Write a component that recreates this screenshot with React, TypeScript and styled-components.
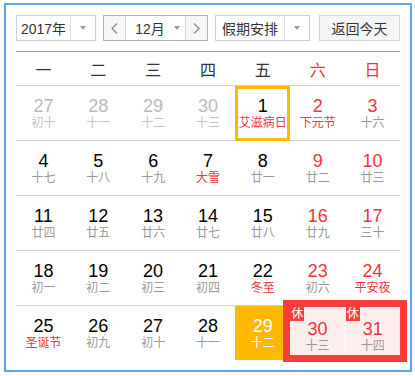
import React from "react";
import styled, { createGlobalStyle, css } from "styled-components";

const GlobalStyle = createGlobalStyle`
  html, body { margin: 0; padding: 0; background: #ffffff; }
  body { font-family: "Liberation Sans", Arial, "Noto Sans CJK SC", sans-serif; }
  * { box-sizing: border-box; }
`;

const BLUE = "#5ea6ef";
const RED = "#f0343c";
const GOLD = "#ffb800";
const LINE = "#d2d2d2";

const Frame = styled.div`
  margin: 3px 0 0 4px;
  width: 408px;
  border: 2px solid ${BLUE};
  padding: 10px 10px 10px;
  background: #fff;
`;

const Toolbar = styled.div`
  display: flex;
  align-items: center;
  gap: 7px;
  padding-bottom: 10px;
  border-bottom: 1px solid ${BLUE};
`;

const SelectBox = styled.div<{ $width: number }>`
  display: flex;
  width: ${(p) => p.$width}px;
  height: 26px;
  border: 1px solid #cfcfcf;
  background: #fff;
  color: #333;
  font-size: 14px;
`;

const SelectText = styled.div`
  flex: 1;
  display: flex;
  align-items: center;
  justify-content: center;
  border-right: 1px solid #dedede;
`;

const ArrowCell = styled.div`
  width: 24px;
  display: flex;
  align-items: center;
  justify-content: center;
`;

const Caret = styled.span`
  width: 0;
  height: 0;
  border-left: 3.5px solid transparent;
  border-right: 3.5px solid transparent;
  border-top: 4px solid #999;
`;

const MonthGroup = styled.div`
  display: flex;
  width: 105px;
  height: 26px;
  border: 1px solid #b4b4b4;
  color: #333;
  font-size: 14px;
`;

const NavButton = styled.div<{ $side: "left" | "right" }>`
  width: 22px;
  display: flex;
  align-items: center;
  justify-content: center;
  background: #f6f6f6;
  ${(p) =>
    p.$side === "left"
      ? css`border-right: 1px solid #d4d4d4;`
      : css`border-left: 1px solid #d4d4d4;`}
`;

const MonthLabel = styled.div`
  flex: 1;
  display: flex;
  align-items: center;
  justify-content: center;
  gap: 9px;
  padding-left: 4px;
  background: #fff;
`;

const TodayButton = styled.div`
  margin-left: auto;
  width: 81px;
  height: 26px;
  border: 1px solid #d4d4d4;
  background: #f5f5f5;
  color: #333;
  font-size: 14px;
  display: flex;
  align-items: center;
  justify-content: center;
`;

const WeekHeader = styled.div`
  display: grid;
  grid-template-columns: repeat(7, 1fr);
  height: 34px;
  border-bottom: 1px solid ${LINE};
`;

const WeekdayCell = styled.div<{ $weekend: boolean }>`
  display: flex;
  align-items: center;
  justify-content: center;
  font-size: 16px;
  color: ${(p) => (p.$weekend ? RED : "#333")};
`;

const WeekRow = styled.div<{ $last: boolean }>`
  display: grid;
  grid-template-columns: repeat(7, 1fr);
  height: ${(p) => (p.$last ? 54 : 55)}px;
  border-bottom: ${(p) => (p.$last ? "none" : `1px solid ${LINE}`)};
`;

type Variant = "normal" | "today" | "selected";

const DayCell = styled.div<{ $variant: Variant }>`
  position: relative;
  display: flex;
  flex-direction: column;
  align-items: center;
  padding-top: 10px;
  ${(p) =>
    p.$variant === "today" &&
    css`
      box-shadow: inset 0 0 0 3px ${GOLD};
      margin-bottom: -1px;
      z-index: 1;
    `}
  ${(p) =>
    p.$variant === "selected" &&
    css`
      background: ${GOLD};
    `}
`;

type Tone = "normal" | "weekend" | "muted" | "white";

const numColor: Record<Tone, string> = {
  normal: "#000",
  weekend: RED,
  muted: "#bbbbbb",
  white: "#fff",
};

const DayNum = styled.div<{ $tone: Tone }>`
  font-size: 18px;
  line-height: 20px;
  color: ${(p) => numColor[p.$tone]};
`;

type LunarTone = "normal" | "festival" | "muted" | "white";

const lunarColor: Record<LunarTone, string> = {
  normal: "#999",
  festival: RED,
  muted: "#c4c4c4",
  white: "#fff",
};

const Lunar = styled.div<{ $tone: LunarTone }>`
  font-size: 12px;
  line-height: 14px;
  white-space: nowrap;
  color: ${(p) => lunarColor[p.$tone]};
`;

const RestGroup = styled.div`
  grid-column: span 2;
  display: grid;
  grid-template-columns: 1fr 1fr;
  gap: 1px;
  margin: -6px -7px -2px;
  border: 7px solid #f93c3c;
  background: #fff;
  position: relative;
  z-index: 2;
`;

const RestCell = styled.div`
  position: relative;
  display: flex;
  flex-direction: column;
  align-items: center;
  padding-top: 12px;
  background: #fdeeee;
`;

const RestBadge = styled.span`
  position: absolute;
  top: 0;
  left: 0;
  width: 14px;
  height: 14px;
  background: #f93c3c;
  color: #fff;
  font-size: 12px;
  line-height: 14px;
  text-align: center;
`;

const Chevron = ({ dir }: { dir: "left" | "right" }) => (
  <svg width="7" height="11" viewBox="0 0 7 11">
    <polyline
      points={dir === "left" ? "6,0.5 1,5.5 6,10.5" : "1,0.5 6,5.5 1,10.5"}
      fill="none"
      stroke="#888"
      strokeWidth="1.2"
    />
  </svg>
);

type Day = {
  n: number;
  lunar: string;
  festival?: boolean;
  muted?: boolean;
  today?: boolean;
  selected?: boolean;
  rest?: boolean;
};

const weeks: Day[][] = [
  [
    { n: 27, lunar: "初十", muted: true },
    { n: 28, lunar: "十一", muted: true },
    { n: 29, lunar: "十二", muted: true },
    { n: 30, lunar: "十三", muted: true },
    { n: 1, lunar: "艾滋病日", festival: true, today: true },
    { n: 2, lunar: "下元节", festival: true },
    { n: 3, lunar: "十六" },
  ],
  [
    { n: 4, lunar: "十七" },
    { n: 5, lunar: "十八" },
    { n: 6, lunar: "十九" },
    { n: 7, lunar: "大雪", festival: true },
    { n: 8, lunar: "廿一" },
    { n: 9, lunar: "廿二" },
    { n: 10, lunar: "廿三" },
  ],
  [
    { n: 11, lunar: "廿四" },
    { n: 12, lunar: "廿五" },
    { n: 13, lunar: "廿六" },
    { n: 14, lunar: "廿七" },
    { n: 15, lunar: "廿八" },
    { n: 16, lunar: "廿九" },
    { n: 17, lunar: "三十" },
  ],
  [
    { n: 18, lunar: "初一" },
    { n: 19, lunar: "初二" },
    { n: 20, lunar: "初三" },
    { n: 21, lunar: "初四" },
    { n: 22, lunar: "冬至", festival: true },
    { n: 23, lunar: "初六" },
    { n: 24, lunar: "平安夜", festival: true },
  ],
  [
    { n: 25, lunar: "圣诞节", festival: true },
    { n: 26, lunar: "初九" },
    { n: 27, lunar: "初十" },
    { n: 28, lunar: "十一" },
    { n: 29, lunar: "十二", selected: true },
    { n: 30, lunar: "十三", rest: true },
    { n: 31, lunar: "十四", rest: true },
  ],
];

const weekdays = ["一", "二", "三", "四", "五", "六", "日"];

function toneOf(d: Day, col: number): Tone {
  if (d.selected) return "white";
  if (d.muted) return "muted";
  if (col >= 5) return "weekend";
  return "normal";
}

function lunarToneOf(d: Day): LunarTone {
  if (d.selected) return "white";
  if (d.muted) return "muted";
  if (d.festival) return "festival";
  return "normal";
}

export default function App() {
  return (
    <>
      <GlobalStyle />
      <Frame>
        <Toolbar>
          <SelectBox $width={80}>
            <SelectText>2017年</SelectText>
            <ArrowCell>
              <Caret />
            </ArrowCell>
          </SelectBox>
          <MonthGroup>
            <NavButton $side="left">
              <Chevron dir="left" />
            </NavButton>
            <MonthLabel>
              <span>12月</span>
              <Caret />
            </MonthLabel>
            <NavButton $side="right">
              <Chevron dir="right" />
            </NavButton>
          </MonthGroup>
          <SelectBox $width={95}>
            <SelectText>假期安排</SelectText>
            <ArrowCell>
              <Caret />
            </ArrowCell>
          </SelectBox>
          <TodayButton>返回今天</TodayButton>
        </Toolbar>
        <WeekHeader>
          {weekdays.map((w, i) => (
            <WeekdayCell key={w} $weekend={i >= 5}>
              {w}
            </WeekdayCell>
          ))}
        </WeekHeader>
        {weeks.map((week, wi) => {
          const rest = week.filter((d) => d.rest);
          return (
            <WeekRow key={wi} $last={wi === weeks.length - 1}>
              {week.map((d, ci) =>
                d.rest ? null : (
                  <DayCell
                    key={ci}
                    $variant={d.today ? "today" : d.selected ? "selected" : "normal"}
                  >
                    <DayNum $tone={toneOf(d, ci)}>{d.n}</DayNum>
                    <Lunar $tone={lunarToneOf(d)}>{d.lunar}</Lunar>
                  </DayCell>
                )
              )}
              {rest.length > 0 && (
                <RestGroup>
                  {rest.map((d) => (
                    <RestCell key={d.n}>
                      <RestBadge>休</RestBadge>
                      <DayNum $tone="weekend">{d.n}</DayNum>
                      <Lunar $tone="normal">{d.lunar}</Lunar>
                    </RestCell>
                  ))}
                </RestGroup>
              )}
            </WeekRow>
          );
        })}
      </Frame>
    </>
  );
}
